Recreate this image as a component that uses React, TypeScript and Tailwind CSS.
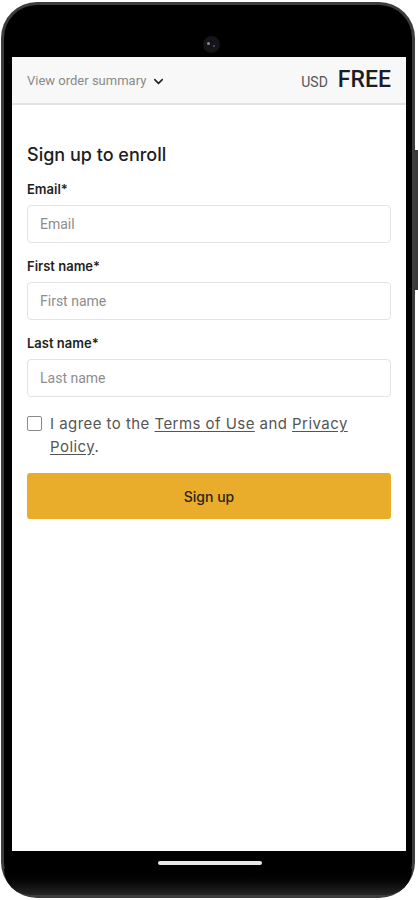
import { ChevronDown } from 'lucide-react';

function Field({ label, placeholder }: { label: string; placeholder: string }) {
  return (
    <div className="flex flex-col">
      <label className="text-[13px] leading-[18px] font-semibold text-[#1f1f24] font-['Inter',sans-serif]">
        {label}*
      </label>
      <div className="mt-[7px] h-[38px] rounded-[4px] border border-[#e3e3e6] bg-white flex items-center px-[12px]">
        <span className="text-[14px] text-[#8d8d8d] font-['Roboto',sans-serif]">{placeholder}</span>
      </div>
    </div>
  );
}

export default function App() {
  return (
    <div className="relative w-[418px] h-[900px] bg-white overflow-hidden">
      {/* side button */}
      <div className="absolute right-0 top-[150px] w-[4px] h-[140px] rounded-l-[1px] bg-[#3a3a3a]" />

      {/* phone body */}
      <div className="ml-[1px] mt-[2px] w-[414px] h-[896px] rounded-[36px] bg-[#3d3d3d] p-[3px]">
        <div className="relative h-full rounded-[33px] bg-black pl-[8px] pr-[6px] pt-[52px] pb-[44px] flex flex-col">
          {/* camera */}
          <div className="absolute left-[199px] top-[31px] w-[17px] h-[17px] rounded-full bg-[#151518] flex items-center justify-center">
            <div className="w-[3px] h-[3px] rounded-full bg-[#8a8a9a] -translate-x-[2px] -translate-y-[1px]" />
            <div className="w-[2px] h-[2px] rounded-full bg-[#4455aa] translate-x-[1px] translate-y-[1px]" />
          </div>

          {/* screen */}
          <div className="flex-1 bg-white flex flex-col">
            <div className="h-[48px] bg-[#f8f8f8] border-b-2 border-[#e2e2e2] flex items-center justify-between pl-[15px] pr-[15px]">
              <div className="flex items-center gap-[5px] pt-[2px]">
                <span className="text-[13px] text-[#8a8a8a] font-['Roboto',sans-serif]">View order summary</span>
                <ChevronDown className="w-[15px] h-[15px] text-[#222]" strokeWidth={2.5} />
              </div>
              <div className="flex items-baseline gap-[10px] pt-[1px]">
                <span className="text-[14px] text-[#555] font-['Roboto',sans-serif]">USD</span>
                <span className="text-[23px] font-medium text-[#1d1d26] font-['Roboto',sans-serif]">FREE</span>
              </div>
            </div>

            <div className="px-[15px] pt-[38px]">
              <h1 className="text-[18px] leading-[24px] font-medium text-[#1d1d24] font-['Inter',sans-serif]">
                Sign up to enroll
              </h1>
              <div className="mt-[13px] flex flex-col gap-[14px]">
                <Field label="Email" placeholder="Email" />
                <Field label="First name" placeholder="First name" />
                <Field label="Last name" placeholder="Last name" />
              </div>

              <div className="mt-[15px] flex items-start gap-[8px]">
                <div className="mt-[4px] w-[15px] h-[15px] shrink-0 rounded-[2px] border border-[#8a8a8a] bg-white" />
                <p className="w-[320px] text-[15px] leading-[23px] tracking-[0.45px] text-[#555] font-['Inter',sans-serif]">
                  I agree to the <span className="underline underline-offset-2">Terms of Use</span> and{' '}
                  <span className="underline underline-offset-2">Privacy Policy</span>.
                </p>
              </div>

              <button className="mt-[15px] w-full h-[46px] rounded-[3px] bg-[#e9ad2b] text-[14px] font-medium text-[#2a2418] font-['Inter',sans-serif]">
                Sign up
              </button>
            </div>
          </div>

          {/* home indicator */}
          <div className="absolute left-[154px] bottom-[30px] w-[104px] h-[4px] rounded-full bg-[#e8e8e8]" />
          <div className="absolute left-0 right-0 bottom-0 h-[26px] rounded-b-[33px] bg-gradient-to-b from-black to-[#262626]" />
        </div>
      </div>
    </div>
  );
}
